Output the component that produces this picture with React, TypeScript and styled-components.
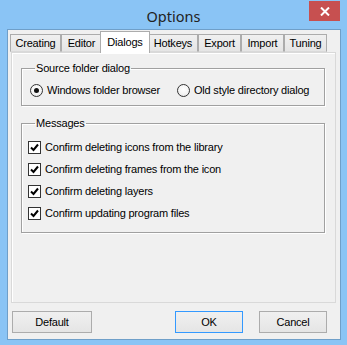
import React from 'react';
import styled, { createGlobalStyle } from 'styled-components';

const Global = createGlobalStyle`
  html, body { margin: 0; padding: 0; }
  body {
    background: #8ac4f5;
    font-family: "Liberation Sans", Arial, sans-serif;
    font-size: 11px;
    letter-spacing: -0.2px;
    color: #000;
  }
`;

const Window = styled.div`
  width: 347px;
  height: 345px;
  box-sizing: border-box;
  background: #8ac4f5;
  display: flex;
  flex-direction: column;
`;

const TitleBar = styled.div`
  height: 29px;
  display: grid;
  grid-template-columns: 1fr auto 1fr;
  align-items: center;
`;

const Title = styled.div`
  grid-column: 2;
  font-family: "Noto Sans", "Open Sans", sans-serif;
  font-size: 14.5px;
  letter-spacing: 0;
  color: #222;
  padding-top: 3px;
`;

const CloseButton = styled.div`
  grid-column: 3;
  justify-self: end;
  align-self: start;
  margin-top: 1px;
  margin-right: 7px;
  width: 31px;
  height: 20px;
  background: #c75050;
  display: flex;
  align-items: center;
  justify-content: center;
`;

const Client = styled.div`
  flex: 1;
  margin: 0 6px 5px 7px;
  border: 1px solid #6f9fc9;
  background: #f0f0f0;
  display: flex;
  flex-direction: column;
`;

const TabControl = styled.div`
  margin: 1px 0 0 3px;
  width: 325px;
  display: flex;
  flex-direction: column;
`;

const TabStrip = styled.div`
  height: 21px;
  display: flex;
  align-items: flex-end;
  margin-left: -1px;
`;

const Tab = styled.div<{ $w: number; $active?: boolean }>`
  box-sizing: border-box;
  width: ${p => (p.$active ? p.$w + 4 : p.$w)}px;
  height: ${p => (p.$active ? 22 : 18)}px;
  margin: ${p => (p.$active ? '0 -2px -1px -2px' : '0')};
  position: relative;
  z-index: ${p => (p.$active ? 2 : 1)};
  border: 1px solid #acacac;
  border-bottom: ${p => (p.$active ? 'none' : '1px solid #d9d9d9')};
  background: ${p => (p.$active ? '#ffffff' : 'linear-gradient(#f0f0f0, #e5e5e5)')};
  display: flex;
  align-items: center;
  justify-content: center;
  padding-bottom: ${p => (p.$active ? 2 : 0)}px;
  white-space: nowrap;
`;

const Panel = styled.div`
  box-sizing: border-box;
  height: 251px;
  border: 1px solid #d9d9d9;
  box-shadow: inset 1px 1px 0 #ffffff;
  background: #f0f0f0;
  padding: 9px 10px 0 9px;
  display: flex;
  flex-direction: column;
  gap: 11px;
`;

const Group = styled.fieldset<{ $pt: number; $pb: number }>`
  margin: 0;
  padding: ${p => p.$pt}px 6px ${p => p.$pb}px 6px;
  border: 1px solid #a0a0a0;
  box-shadow: 1px 1px 0 #ffffff, inset 1px 1px 0 #ffffff;
  min-width: 0;
`;

const Legend = styled.legend`
  padding: 0 1px;
  margin-left: 7px;
  line-height: 13px;
`;

const RadioRow = styled.div`
  display: grid;
  grid-template-columns: 147px auto;
  padding-left: 2px;
  height: 13px;
`;

const Option = styled.label`
  display: flex;
  align-items: center;
  gap: 4px;
  white-space: nowrap;
  line-height: 13px;
`;

const RadioCircle = styled.span<{ $on?: boolean }>`
  box-sizing: border-box;
  width: 13px;
  height: 13px;
  border-radius: 50%;
  border: 1px solid #333;
  background: radial-gradient(circle at 50% 40%, #ffffff 0%, #f4f4f4 55%, #dcdcdc 100%);
  display: flex;
  align-items: center;
  justify-content: center;
  flex: none;
  &::after {
    content: '';
    display: ${p => (p.$on ? 'block' : 'none')};
    width: 5px;
    height: 5px;
    border-radius: 50%;
    background: #111;
  }
`;

const CheckList = styled.div`
  display: flex;
  flex-direction: column;
`;

const CheckRow = styled.label`
  height: 22px;
  display: flex;
  align-items: center;
  gap: 4px;
  white-space: nowrap;
`;

const CheckBox = styled.span`
  box-sizing: border-box;
  width: 13px;
  height: 13px;
  border: 1px solid #333;
  background: #fff;
  display: flex;
  align-items: center;
  justify-content: center;
  flex: none;
`;

const Footer = styled.div`
  display: flex;
  align-items: center;
  margin: 8px 13px 0 4px;
`;

const Spacer = styled.div`
  flex: 1;
`;

const Button = styled.div<{ $w: number; $default?: boolean }>`
  box-sizing: border-box;
  width: ${p => p.$w}px;
  height: 22px;
  border: 1px solid ${p => (p.$default ? '#3399ff' : '#acacac')};
  background: linear-gradient(#f0f0f0, #e5e5e5);
  display: flex;
  align-items: center;
  justify-content: center;
  margin-left: ${p => (p.$default ? 0 : 16)}px;
  &:first-child { margin-left: 0; }
`;

const tabs: { label: string; w: number }[] = [
  { label: 'Creating', w: 51 },
  { label: 'Editor', w: 41 },
  { label: 'Dialogs', w: 46 },
  { label: 'Hotkeys', w: 50 },
  { label: 'Export', w: 43 },
  { label: 'Import', w: 43 },
  { label: 'Tuning', w: 43 },
];

const messages = [
  'Confirm deleting icons from the library',
  'Confirm deleting frames from the icon',
  'Confirm deleting layers',
  'Confirm updating program files',
];

const Check = () => (
  <svg width="9" height="9" viewBox="0 0 9 9">
    <path d="M1 4.5 L3.5 7 L8 1.5" fill="none" stroke="#000" strokeWidth="2" />
  </svg>
);

export default function App() {
  return (
    <>
      <Global />
      <Window>
        <TitleBar>
          <Title>Options</Title>
          <CloseButton>
            <svg width="10" height="9" viewBox="0 0 10 9">
              <path d="M1 0.5 L9 8.5 M9 0.5 L1 8.5" stroke="#fff" strokeWidth="2" />
            </svg>
          </CloseButton>
        </TitleBar>
        <Client>
          <TabControl>
            <TabStrip>
              {tabs.map(t => (
                <Tab key={t.label} $w={t.w} $active={t.label === 'Dialogs'}>
                  {t.label}
                </Tab>
              ))}
            </TabStrip>
            <Panel>
              <Group $pt={9} $pb={8}>
                <Legend>Source folder dialog</Legend>
                <RadioRow>
                  <Option>
                    <RadioCircle $on />
                    Windows folder browser
                  </Option>
                  <Option>
                    <RadioCircle />
                    Old style directory dialog
                  </Option>
                </RadioRow>
              </Group>
              <Group $pt={6} $pb={8}>
                <Legend>Messages</Legend>
                <CheckList>
                  {messages.map(m => (
                    <CheckRow key={m}>
                      <CheckBox>
                        <Check />
                      </CheckBox>
                      {m}
                    </CheckRow>
                  ))}
                </CheckList>
              </Group>
            </Panel>
          </TabControl>
          <Footer>
            <Button $w={80}>Default</Button>
            <Spacer />
            <Button $w={68} $default>OK</Button>
            <Button $w={68}>Cancel</Button>
          </Footer>
        </Client>
      </Window>
    </>
  );
}
